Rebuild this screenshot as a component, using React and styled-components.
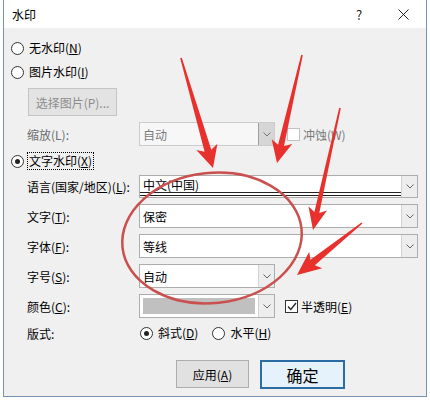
import React from "react";
import styled, { createGlobalStyle, css } from "styled-components";

const GlobalStyle = createGlobalStyle`
  body {
    margin: 0;
    background: #fff;
    font-family: "Noto Sans CJK SC", "Noto Sans", sans-serif;
    font-size: 12px;
    color: #000;
  }
`;

const Page = styled.div`
  position: relative;
  width: 430px;
  height: 407px;
  overflow: hidden;
`;

const Dialog = styled.div`
  margin-left: 3px;
  width: 422px;
  border: 1px solid #7593b0;
  border-top: 0;
  background: #f0f0f0;
`;

const TitleBar = styled.div`
  display: flex;
  align-items: center;
  height: 28px;
  background: #fff;
  padding-left: 8px;
`;

const Title = styled.div`
  flex: 1;
  font-size: 12px;
`;

const TitleButton = styled.div`
  width: 44px;
  height: 28px;
  display: flex;
  align-items: center;
  justify-content: center;
  font-size: 13px;
  color: #222;
  margin-right: ${({ $mr }) => $mr || 0}px;
`;

const Body = styled.div`
  display: flex;
  flex-direction: column;
  padding: 10px 0 7px 7px;
`;

const RadioRow = styled.div`
  display: flex;
  align-items: center;
  height: ${({ $h }) => $h || 20}px;
  margin-top: ${({ $mt }) => $mt || 0}px;
  gap: 3px;
`;

const RadioCircle = styled.span`
  position: relative;
  width: 11px;
  height: 11px;
  border: 1px solid #333;
  border-radius: 50%;
  background: #fff;
  flex: none;
  ${({ $checked }) =>
    $checked &&
    css`
      &::after {
        content: "";
        position: absolute;
        left: 3px;
        top: 3px;
        width: 5px;
        height: 5px;
        border-radius: 50%;
        background: #222;
      }
    `}
`;

const RadioText = styled.span`
  line-height: 16px;
  padding: 0 1px;
  border: 1px ${({ $focus }) => ($focus ? "dotted #000" : "solid transparent")};
`;

const PushButton = styled.div`
  display: flex;
  align-items: center;
  justify-content: center;
  box-sizing: border-box;
  width: ${({ $w }) => $w}px;
  height: ${({ $h }) => $h || 28}px;
  margin-top: ${({ $mt }) => $mt || 0}px;
  margin-left: ${({ $ml }) => $ml || 0}px;
  background: ${({ $primary }) => ($primary ? "#e5f1fb" : "#e1e1e1")};
  border: ${({ $primary }) => ($primary ? "2px solid #2a6ca3" : "1px solid #adadad")};
  color: ${({ $disabled }) => ($disabled ? "#8d8d8d" : "#000")};
  font-size: ${({ $primary }) => ($primary ? "16px" : "12px")};
  ${({ $disabled }) =>
    $disabled &&
    css`
      background: #e3e3e3;
      border-color: #c4c4c4;
    `}
`;

const FieldRow = styled.div`
  display: grid;
  grid-template-columns: 112px auto 1fr;
  align-items: center;
  padding-left: 16px;
  margin-top: ${({ $mt }) => $mt || 0}px;
`;

const FieldLabel = styled.span`
  color: ${({ $disabled }) => ($disabled ? "#6d6d6d" : "#000")};
`;

const Combo = styled.div`
  display: flex;
  box-sizing: border-box;
  width: ${({ $w }) => $w}px;
  height: ${({ $h }) => $h || 24}px;
  border: 1px solid ${({ $disabled }) => ($disabled ? "#cccccc" : "#adadad")};
  background: ${({ $disabled }) => ($disabled ? "#f7f7f7" : "#fff")};
`;

const ComboText = styled.div`
  flex: 1;
  display: flex;
  align-items: center;
  padding-left: 3px;
  color: ${({ $disabled }) => ($disabled ? "#7a7a7a" : "#000")};
  ${({ $double }) =>
    $double &&
    css`
      border-bottom: 4px double #222;
      margin-bottom: 1px;
    `}
`;

const Swatch = styled.div`
  flex: 1;
  margin: 3px;
  background: #c0c0c0;
`;

const ComboArrow = styled.div`
  width: 15px;
  display: flex;
  align-items: center;
  justify-content: center;
  background: ${({ $disabled }) => ($disabled ? "#d6d6d6" : "#ededed")};
  border-left: 1px solid ${({ $disabled }) => ($disabled ? "#9f9f9f" : "#d2d2d2")};
`;

const CheckWrap = styled.div`
  display: flex;
  align-items: center;
  gap: 3px;
  margin-left: ${({ $ml }) => $ml || 0}px;
  color: ${({ $disabled }) => ($disabled ? "#7a7a7a" : "#000")};
`;

const CheckBox = styled.span`
  display: flex;
  align-items: center;
  justify-content: center;
  width: 11px;
  height: 11px;
  border: 1px solid ${({ $disabled }) => ($disabled ? "#c2c2c2" : "#333")};
  background: #fff;
`;

const RadioGroup = styled.div`
  display: flex;
  align-items: center;
  gap: 12px;
  margin-left: 1px;
`;

const ButtonBar = styled.div`
  display: flex;
  gap: 11px;
  margin-top: 17px;
  padding-left: 165px;
`;

const Overlay = styled.svg`
  position: absolute;
  left: 0;
  top: 0;
  pointer-events: none;
`;

const Chevron = ({ color = "#666" }) => (
  <svg width="8" height="5" viewBox="0 0 8 5">
    <polyline points="0.5,0.5 4,4 7.5,0.5" fill="none" stroke={color} strokeWidth="1" />
  </svg>
);

const Check = () => (
  <svg width="10" height="9" viewBox="0 0 10 9">
    <polyline points="1,4.5 3.8,7.5 9,1" fill="none" stroke="#222" strokeWidth="1.3" />
  </svg>
);

const CloseIcon = () => (
  <svg width="11" height="11" viewBox="0 0 11 11">
    <path d="M0.5 0.5 L10.5 10.5 M10.5 0.5 L0.5 10.5" stroke="#222" strokeWidth="1" />
  </svg>
);

function arrowPoints([tx, ty], [hx, hy], shaft, headW, headL) {
  const len = Math.hypot(hx - tx, hy - ty);
  const dx = (hx - tx) / len;
  const dy = (hy - ty) / len;
  const nx = -dy;
  const ny = dx;
  const jx = hx - dx * (headL - 4);
  const jy = hy - dy * (headL - 4);
  const bx = hx - dx * headL;
  const by = hy - dy * headL;
  const p = [
    [tx + nx * 0.8, ty + ny * 0.8],
    [jx + (nx * shaft) / 2, jy + (ny * shaft) / 2],
    [bx + (nx * headW) / 2, by + (ny * headW) / 2],
    [hx, hy],
    [bx - (nx * headW) / 2, by - (ny * headW) / 2],
    [jx - (nx * shaft) / 2, jy - (ny * shaft) / 2],
    [tx - nx * 0.8, ty - ny * 0.8],
  ];
  return p.map(([x, y]) => `${x.toFixed(1)},${y.toFixed(1)}`).join(" ");
}

const arrows = [
  { tail: [181, 58], tip: [213, 168], shaft: 7, headW: 22, headL: 22 },
  { tail: [302, 55], tip: [277, 163], shaft: 6, headW: 21, headL: 22 },
  { tail: [340, 108], tip: [313, 230], shaft: 5, headW: 19, headL: 22 },
  { tail: [362, 223], tip: [297, 275], shaft: 7, headW: 21, headL: 24 },
];

function Radio({ checked, focus, children, h, mt }) {
  return (
    <RadioRow $h={h} $mt={mt}>
      <RadioCircle $checked={checked} />
      <RadioText $focus={focus}>{children}</RadioText>
    </RadioRow>
  );
}

function ComboBox({ w, h, disabled, double, swatch, children }) {
  return (
    <Combo $w={w} $h={h} $disabled={disabled}>
      {swatch ? (
        <Swatch />
      ) : (
        <ComboText $disabled={disabled} $double={double}>
          {children}
        </ComboText>
      )}
      <ComboArrow $disabled={disabled}>
        <Chevron color={disabled ? "#777" : "#666"} />
      </ComboArrow>
    </Combo>
  );
}

export default function App() {
  return (
    <Page>
      <GlobalStyle />
      <Dialog>
        <TitleBar>
          <Title>水印</Title>
          <TitleButton>?</TitleButton>
          <TitleButton $mr={1}>
            <CloseIcon />
          </TitleButton>
        </TitleBar>
        <Body>
          <Radio>
            无水印(<u>N</u>)
          </Radio>
          <Radio mt={4}>
            图片水印(<u>I</u>)
          </Radio>
          <PushButton $w={89} $mt={6} $ml={17} $disabled>
            选择图片(P)...
          </PushButton>
          <FieldRow $mt={6}>
            <FieldLabel $disabled>缩放(L):</FieldLabel>
            <ComboBox w={136} disabled>
              自动
            </ComboBox>
            <CheckWrap $ml={12} $disabled>
              <CheckBox $disabled />
              冲蚀(W)
            </CheckWrap>
          </FieldRow>
          <Radio checked focus h={18} mt={6}>
            文字水印(<u>X</u>)
          </Radio>
          <FieldRow $mt={5}>
            <FieldLabel>
              语言(国家/地区)(<u>L</u>):
            </FieldLabel>
            <ComboBox w={279} h={23} double>
              中文(中国)
            </ComboBox>
          </FieldRow>
          <FieldRow $mt={6}>
            <FieldLabel>
              文字(<u>T</u>):
            </FieldLabel>
            <ComboBox w={279}>保密</ComboBox>
          </FieldRow>
          <FieldRow $mt={6}>
            <FieldLabel>
              字体(<u>F</u>):
            </FieldLabel>
            <ComboBox w={279}>等线</ComboBox>
          </FieldRow>
          <FieldRow $mt={6}>
            <FieldLabel>
              字号(<u>S</u>):
            </FieldLabel>
            <ComboBox w={136}>自动</ComboBox>
          </FieldRow>
          <FieldRow $mt={6}>
            <FieldLabel>
              颜色(<u>C</u>):
            </FieldLabel>
            <ComboBox w={136} swatch />
            <CheckWrap $ml={10}>
              <CheckBox>
                <Check />
              </CheckBox>
              <span>
                半透明(<u>E</u>)
              </span>
            </CheckWrap>
          </FieldRow>
          <FieldRow $mt={5}>
            <FieldLabel>版式:</FieldLabel>
            <RadioGroup>
              <Radio checked>
                斜式(<u>D</u>)
              </Radio>
              <Radio>
                水平(<u>H</u>)
              </Radio>
            </RadioGroup>
          </FieldRow>
          <ButtonBar>
            <PushButton $w={73}>
              应用(<u>A</u>)
            </PushButton>
            <PushButton $w={85} $h={29} $primary>
              确定
            </PushButton>
          </ButtonBar>
        </Body>
      </Dialog>
      <Overlay width="430" height="407" viewBox="0 0 430 407">
        <ellipse
          cx="212"
          cy="238"
          rx="90"
          ry="65"
          transform="rotate(-6 212 238)"
          fill="none"
          stroke="#c9504e"
          strokeWidth="2.5"
        />
        {arrows.map((a, i) => (
          <polygon
            key={i}
            points={arrowPoints(a.tail, a.tip, a.shaft, a.headW, a.headL)}
            fill="#e8302d"
          />
        ))}
      </Overlay>
    </Page>
  );
}
